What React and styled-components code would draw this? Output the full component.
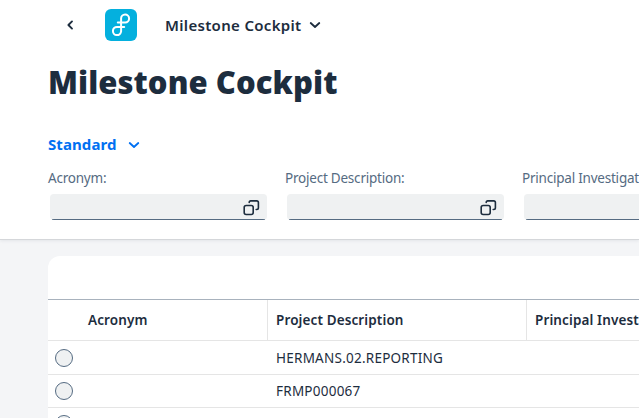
import React from "react";
import styled, { createGlobalStyle } from "styled-components";

const Global = createGlobalStyle`
  * { box-sizing: border-box; }
  html, body { margin: 0; height: 418px; overflow: hidden; }
  body { background: #f4f5f7; color: #1d2d3e; font-family: "Noto Sans", "Open Sans", sans-serif; font-size: 14px; }
`;

const Page = styled.div`
  width: 639px;
  height: 418px;
  overflow: hidden;
`;

const Header = styled.header`
  height: 240px;
  background: #fff;
  border-bottom: 1px solid #d5d7da;
  box-shadow: 0 1px 3px rgba(34, 53, 72, 0.08);
`;

const ShellBar = styled.div`
  height: 52px;
  padding: 0 0 2px 66px;
  display: flex;
  align-items: center;
`;

const Logo = styled.svg`
  width: 32px;
  height: 32px;
  margin: 0 28px 0 31px;
`;

const ShellTitle = styled.span`
  font-size: 15px;
  font-weight: 600;
  line-height: 20px;
  width: 137px;
  margin-right: 7px;
  white-space: nowrap;
  letter-spacing: 0.32px;
`;

const PageTitle = styled.h1`
  margin: 8px 0 0 48px;
  height: 44px;
  font-size: 31px;
  font-weight: 900;
  line-height: 44px;
  white-space: nowrap;
  letter-spacing: 0.06px;
`;

const Variant = styled.div`
  display: flex;
  align-items: center;
  height: 24px;
  margin: 29px 0 0 48px;
  gap: 12px;
  color: #0070f2;
`;

const VariantName = styled.span`
  width: 68px;
  height: 24px;
  font-size: 15px;
  font-weight: 700;
  line-height: 22px;
  letter-spacing: 0.08px;
`;

const Filters = styled.div`
  display: flex;
  margin: 11px 0 0 48px;
`;

const Filter = styled.div`
  flex: 0 0 237px;
`;

const Label = styled.label`
  display: block;
  height: 20px;
  line-height: 20px;
  color: #556b82;
  white-space: nowrap;
  font-size: 13.5px;
  letter-spacing: -0.22px;
`;

const Field = styled.div`
  display: flex;
  align-items: center;
  justify-content: flex-end;
  width: 217px;
  height: 26px;
  margin: 6px 0 0 2px;
  padding: 1px 6px 0 0;
  border-radius: 4px;
  background: linear-gradient(#556b82, #556b82) 2px 100% / 213px 1px no-repeat, #eff1f2;
`;

const Card = styled.section`
  margin: 16px 0 0 48px;
  height: 162px;
  width: 591px;
  overflow: hidden;
  background: #fff;
  border-top-left-radius: 12px;
`;

const Toolbar = styled.div`
  height: 44px;
  border-bottom: 1px solid #a8b2bd;
`;

const Row = styled.div`
  display: grid;
  grid-template-columns: 32px 188px 259px 200px;
  height: ${(p) => p.$height || 33}px;
  border-bottom: 1px solid #e5e5e5;
  align-items: stretch;
`;

const Cell = styled.div`
  display: flex;
  align-items: center;
  padding-left: 8px;
  white-space: nowrap;
  font-size: 13.5px;
  letter-spacing: 0.24px;
`;

const HeadCell = styled(Cell)`
  font-weight: 600;
  letter-spacing: 0.12px;
  border-right: ${(p) => (p.$divider ? "1px solid #e5e5e5" : "0")};
`;

const Radio = styled.span`
  width: 18px;
  height: 18px;
  margin: auto;
  flex: none;
  border: 1px solid #556b82;
  border-radius: 50%;
  background: #eff1f2;
`;

const Glyph = styled.svg`
  flex: none;
  display: block;
  fill: none;
  stroke: currentColor;
  stroke-linecap: round;
  stroke-linejoin: round;
`;

const BackIcon = () => (
  <Glyph width="8" height="10" viewBox="0 0 8 10" strokeWidth="1.9">
    <path d="M6 1.4 2.4 5 6 8.6" />
  </Glyph>
);

const DownIcon = () => (
  <Glyph width="12" height="8" viewBox="0 0 12 8" strokeWidth="1.8">
    <path d="M1.7 2 6 6l4.3-4" />
  </Glyph>
);

const ValueHelpIcon = () => (
  <Glyph width="18" height="16" viewBox="0 0 18 16" strokeWidth="1.6">
    <rect x="1.2" y="5.5" width="9" height="9" rx="2" />
    <path d="M6.2 2.5C6.2 1.6 6.8.9 7.7.9h6c1 0 1.7.7 1.7 1.7v5.2c0 1-.7 1.7-1.7 1.7h-.5" />
  </Glyph>
);

const filters = ["Acronym:", "Project Description:", "Principal Investigator:"];

const rows = ["HERMANS.02.REPORTING", "FRMP000067", ""];

export default function App() {
  return (
    <Page>
      <Global />
      <Header>
        <ShellBar>
          <BackIcon />
          <Logo viewBox="0 0 32 32">
            <rect width="32" height="32" rx="6" fill="#04b0de" />
            <path
              d="M12.8 13.6h7.4a4 4 0 1 0-4.1-4v12.8a4.1 4.1 0 1 1-4.1-4.5h7.2"
              fill="none" stroke="#fff" strokeWidth="2" strokeLinecap="round"
            />
          </Logo>
          <ShellTitle>Milestone Cockpit</ShellTitle>
          <DownIcon />
        </ShellBar>
        <PageTitle>Milestone Cockpit</PageTitle>
        <Variant>
          <VariantName>Standard</VariantName>
          <DownIcon />
        </Variant>
        <Filters>
          {filters.map((label) => (
            <Filter key={label}>
              <Label>{label}</Label>
              <Field><ValueHelpIcon /></Field>
            </Filter>
          ))}
        </Filters>
      </Header>
      <Card>
        <Toolbar />
        <Row $height={41}>
          <HeadCell />
          <HeadCell $divider>Acronym</HeadCell>
          <HeadCell $divider>Project Description</HeadCell>
          <HeadCell>Principal Investigator</HeadCell>
        </Row>
        {rows.map((name, i) => (
          <Row key={i} $height={i === 0 ? 34 : 33}>
            <Radio />
            <Cell />
            <Cell>{name}</Cell>
            <Cell />
          </Row>
        ))}
      </Card>
    </Page>
  );
}
